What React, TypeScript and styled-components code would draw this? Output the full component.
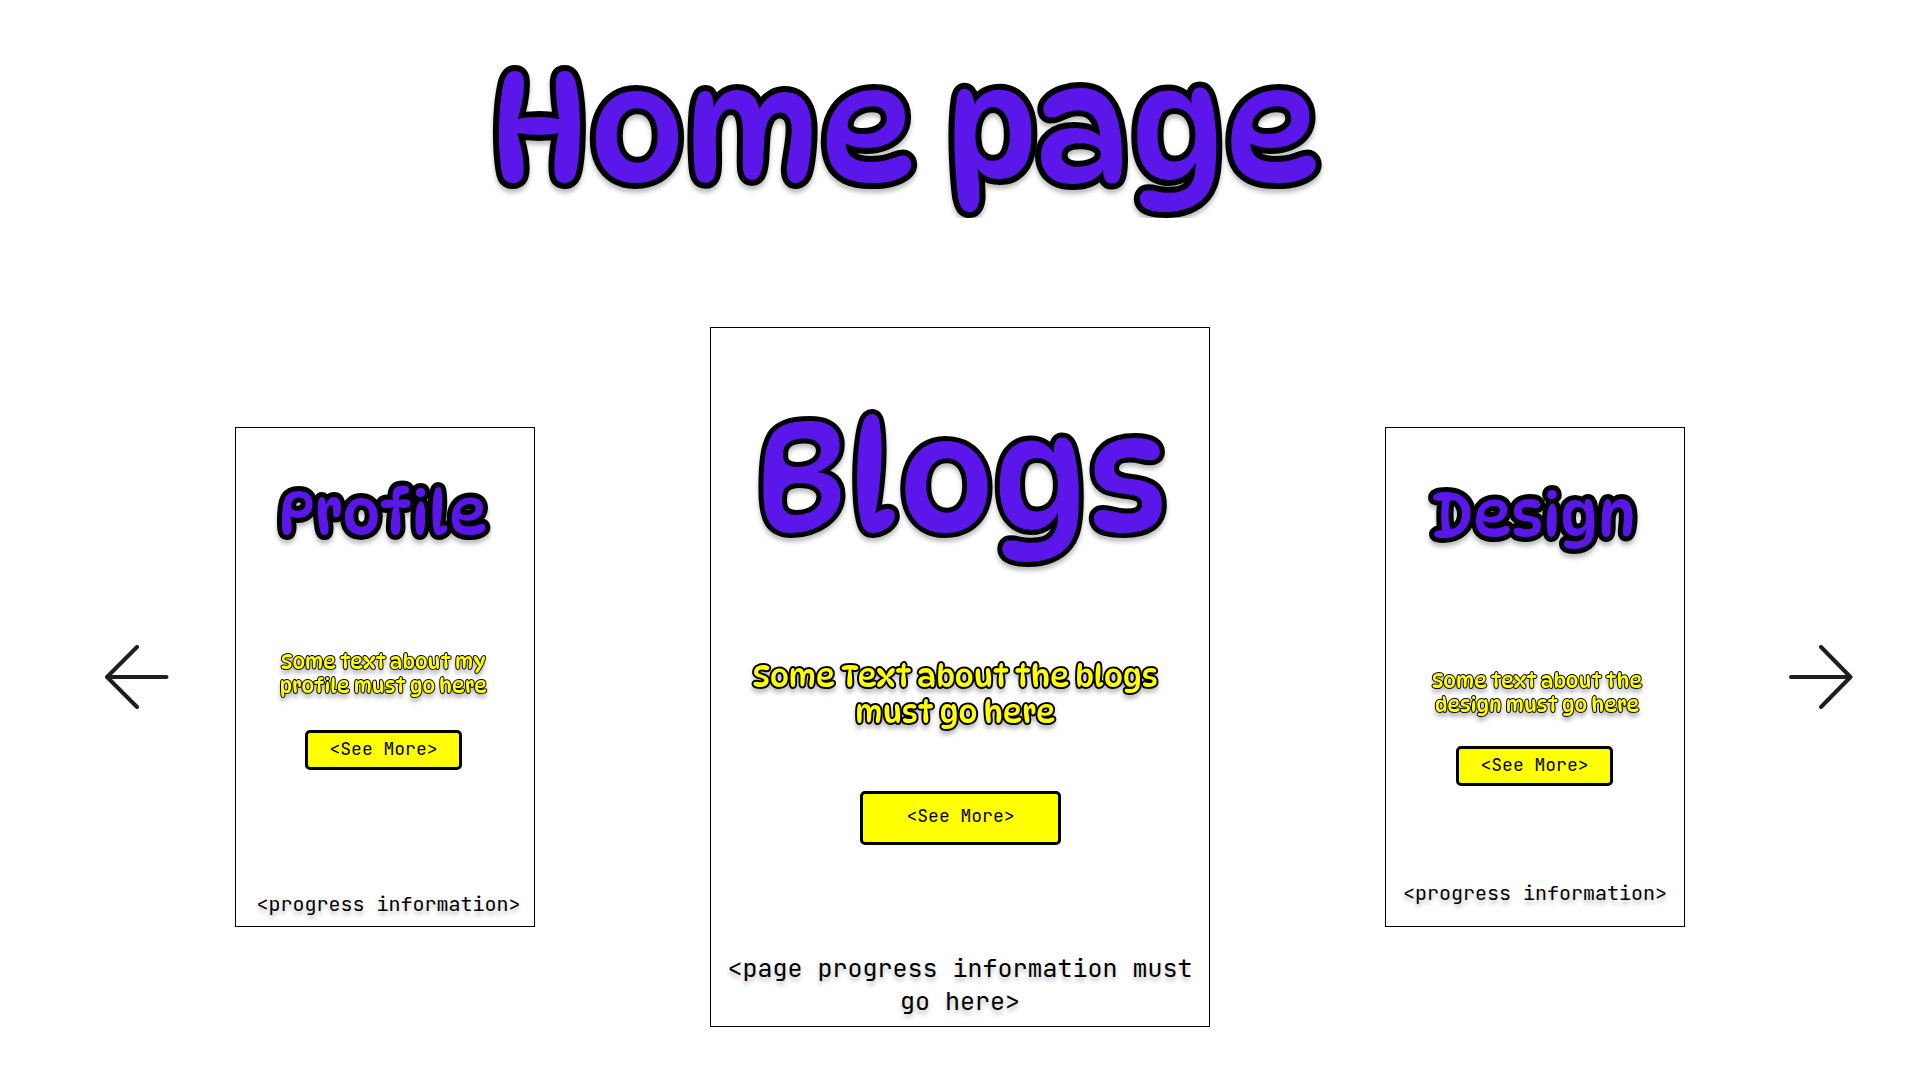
import React from "react";
import styled, { createGlobalStyle } from "styled-components";

const PURPLE = "#5b17ea";
const YELLOW = "#ffff00";

const display = `"DynaPuff", "Noto Sans", sans-serif`;
const mono = `"JetBrains Mono", "DejaVu Sans Mono", "Liberation Mono", monospace`;

const GlobalStyle = createGlobalStyle`
  * { box-sizing: border-box; }
  body { margin: 0; background: #fff; overflow: hidden; }
`;

const Page = styled.main`
  width: 1920px;
  height: 1080px;
  background: #fff;
  overflow: hidden;
`;

const Banner = styled.header`
  height: 181px;
  margin-top: 37px;
  padding-left: 489px;
  overflow: hidden;
`;

const Title = styled.h1<{ $size: number; $outline: number }>`
  margin: 0;
  white-space: nowrap;
  font-family: ${display};
  font-weight: 400;
  font-size: ${(p) => p.$size}px;
  line-height: 1.2;
  color: ${PURPLE};
  -webkit-text-stroke: ${(p) => p.$outline * 2}px #000;
  paint-order: stroke fill;
  stroke-linejoin: round;
  filter: drop-shadow(0 4px 2px rgba(0, 0, 0, 0.25));
`;

const Carousel = styled.section`
  display: flex;
  align-items: center;
  height: 700px;
  margin-top: 109px;
  padding-left: 105px;
`;

const ArrowButton = styled.button`
  flex: none;
  width: 64px;
  height: 64px;
  padding: 0;
  border: 0;
  background: none;

  svg { display: block; }
`;

const Card = styled.article<{ $width: number; $height: number; $before: number; $after?: number }>`
  flex: none;
  display: flex;
  flex-direction: column;
  width: ${(p) => p.$width}px;
  height: ${(p) => p.$height}px;
  margin-left: ${(p) => p.$before}px;
  margin-right: ${(p) => p.$after ?? 0}px;
  border: 1px solid #000;
`;

const Heading = styled.div<{ $top: number; $left: number; $height: number }>`
  height: ${(p) => p.$height}px;
  margin-top: ${(p) => p.$top}px;
  padding-left: ${(p) => p.$left}px;
`;

const Blurb = styled.p<{ $top: number; $size: number; $line: number; $outline: number; $shift?: number }>`
  margin: ${(p) => p.$top}px 0 0 ${(p) => p.$shift ?? 0}px;
  text-align: center;
  white-space: nowrap;
  font-family: ${display};
  font-weight: 400;
  font-size: ${(p) => p.$size}px;
  line-height: ${(p) => p.$line}px;
  color: ${YELLOW};
  -webkit-text-stroke: ${(p) => p.$outline * 2}px #000;
  paint-order: stroke fill;
  stroke-linejoin: round;
  filter: drop-shadow(0 4px 2px rgba(0, 0, 0, 0.25));
`;

const SeeMore = styled.button<{ $width: number; $height: number; $top: number; $left: number; $lift: number }>`
  flex: none;
  width: ${(p) => p.$width}px;
  height: ${(p) => p.$height}px;
  margin: ${(p) => p.$top}px 0 0 ${(p) => p.$left}px;
  padding: 0 0 ${(p) => p.$lift}px;
  border: 3px solid #000;
  border-radius: 5px;
  background: ${YELLOW};
  color: #000;
  font-family: ${mono};
  font-size: 18px;
  line-height: 24px;
`;

const Progress = styled.p<{ $top: number; $left?: number; $size: number; $line: number }>`
  margin: ${(p) => p.$top}px 0 0;
  padding-left: ${(p) => p.$left ?? 0}px;
  text-align: center;
  white-space: nowrap;
  font-family: ${mono};
  font-size: ${(p) => p.$size}px;
  line-height: ${(p) => p.$line}px;
  color: #000;
  text-shadow: 0 4px 4px rgba(0, 0, 0, 0.25);
`;

const Arrow = ({ direction }: { direction: "left" | "right" }) => (
  <ArrowButton aria-label={direction}>
    <svg width="64" height="64" viewBox="0 0 64 64" fill="none" stroke="#1e1e1e" strokeWidth="4" strokeLinecap="round" strokeLinejoin="round">
      {direction === "left" ? (
        <path d="M61.5 32H2M32 2L2 32L32 62" />
      ) : (
        <path d="M2 32H61.5M32 2L61.5 32L32 62" />
      )}
    </svg>
  </ArrowButton>
);

export default function App() {
  return (
    <Page>
      <GlobalStyle />
      <Banner>
        <Title $size={150} $outline={6}>Home page</Title>
      </Banner>

      <Carousel>
        <Arrow direction="left" />

        <Card $width={300} $height={500} $before={66}>
          <Heading $top={49} $left={42} $height={74}>
            <Title as="h2" $size={60} $outline={5}>Profile</Title>
          </Heading>
          <Blurb $top={99} $size={20} $line={24} $outline={1} $shift={-3.5}>
            Some text about my
            <br />
            profile must go here
          </Blurb>
          <SeeMore $width={157} $height={40} $top={32} $left={69} $lift={2}>
            &lt;See More&gt;
          </SeeMore>
          <Progress $top={121} $left={7} $size={20} $line={26}>
            &lt;progress information&gt;
          </Progress>
        </Card>

        <Card $width={500} $height={700} $before={175}>
          <Heading $top={59} $left={42.5} $height={171}>
            <Title as="h2" $size={150} $outline={5}>Blogs</Title>
          </Heading>
          <Blurb $top={100} $size={30} $line={36} $outline={2} $shift={-9.5}>
            Some Text about the blogs
            <br />
            must go here
          </Blurb>
          <SeeMore $width={201} $height={54} $top={61} $left={149} $lift={4}>
            &lt;See More&gt;
          </SeeMore>
          <Progress $top={107} $size={25} $line={33}>
            &lt;page progress information must
            <br />
            go here&gt;
          </Progress>
        </Card>

        <Card $width={300} $height={500} $before={175} $after={104}>
          <Heading $top={51} $left={45.5} $height={75}>
            <Title as="h2" $size={60} $outline={5}>Design</Title>
          </Heading>
          <Blurb $top={115} $size={20} $line={24} $outline={1} $shift={4}>
            Some text about the
            <br />
            design must go here
          </Blurb>
          <SeeMore $width={157} $height={40} $top={29} $left={70} $lift={2}>
            &lt;See More&gt;
          </SeeMore>
          <Progress $top={94} $size={20} $line={26}>
            &lt;progress information&gt;
          </Progress>
        </Card>

        <Arrow direction="right" />
      </Carousel>
    </Page>
  );
}
